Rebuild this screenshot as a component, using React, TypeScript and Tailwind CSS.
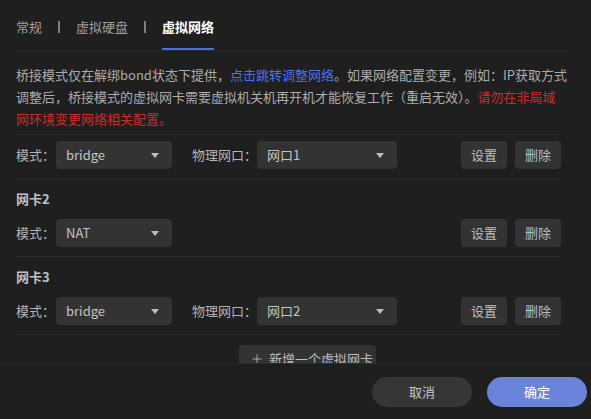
import React, { useState } from 'react';
import { Plus } from 'lucide-react';

const font = { fontFamily: '"Noto Sans CJK SC", "Noto Sans", sans-serif' };

const tabs = ['常规', '虚拟硬盘', '虚拟网络'];

type Nic = {
  title?: string;
  mode: string;
  port?: string;
};

const nics: Nic[] = [
  { mode: 'bridge', port: '网口1' },
  { title: '网卡2', mode: 'NAT' },
  { title: '网卡3', mode: 'bridge', port: '网口2' },
];

const Caret = () => (
  <svg width="8" height="5" viewBox="0 0 8 5" className="shrink-0">
    <polygon points="0,0 8,0 4,5" fill="#bdbdbd" />
  </svg>
);

const Select = ({ value, width }: { value: string; width: string }) => (
  <div
    className={`${width} h-[28px] rounded-[4px] bg-[#333333] pl-[10px] pr-[13px] flex items-center justify-between text-[13px] text-[#c4c4c4]`}
  >
    <span>{value}</span>
    <Caret />
  </div>
);

const SmallButton = ({ label }: { label: string }) => (
  <button className="w-[46px] h-[28px] rounded-[4px] bg-[#333333] text-[13px] text-[#bdbdbd] flex items-center justify-center">
    {label}
  </button>
);

const NicRow = ({ nic }: { nic: Nic }) => (
  <div className="flex items-center h-[28px] text-[13px] text-[#b4b4b4]">
    <span className="w-[40px]">模式：</span>
    <Select value={nic.mode} width="w-[116px]" />
    {nic.port && (
      <>
        <span className="ml-[20px] w-[65px]">物理网口：</span>
        <Select value={nic.port} width="w-[140px]" />
      </>
    )}
    <div className="ml-auto flex gap-[8px]">
      <SmallButton label="设置" />
      <SmallButton label="删除" />
    </div>
  </div>
);

export default function App() {
  const [active, setActive] = useState(2);

  return (
    <div className="w-[591px] h-[419px] bg-[#1f1f1f] flex flex-col overflow-hidden" style={font}>
      {/* tab header */}
      <div className="px-4">
        <div className="w-[552px] h-[51px] flex items-center gap-4 border-b border-[#2a2a2a]">
          {tabs.map((t, i) => (
            <React.Fragment key={t}>
              {i > 0 && <div className="w-[2px] h-[12px] mt-[4px] bg-[#7e7e7e]" />}
              <button
                onClick={() => setActive(i)}
                className={`h-[50px] pt-[5px] border-b-2 text-[13px] ${
                  active === i
                    ? 'border-[#4a6ee0] text-white font-bold'
                    : 'border-transparent text-[#a0a0a0]'
                }`}
              >
                {t}
              </button>
            </React.Fragment>
          ))}
        </div>
      </div>

      {/* scrolling body */}
      <div className="flex-1 overflow-hidden px-4">
        <p className="w-[552px] pt-[13px] text-[13px] leading-[22px] text-[#ababab]">
          桥接模式仅在解绑bond状态下提供，
          <span className="text-[#4d6ff0]">点击跳转调整网络</span>
          。如果网络配置变更，例如：IP获取方式调整后，桥接模式的虚拟网卡需要虚拟机关机再开机才能恢复工作（重启无效）。
          <span className="text-[#cc2b2b]">请勿在非局域网环境变更网络相关配置。</span>
        </p>

        <div className="w-[545px] mt-[4px]">
          {nics.map((nic, i) => (
            <div
              key={i}
              className={`border-b border-[#2a2a2a] pb-[9px] ${
                i === 0 ? 'border-t pt-[6px]' : 'pt-[10px]'
              }`}
            >
              {nic.title && (
                <div className="h-[20px] mb-[10px] flex items-center text-[13px] font-bold text-[#c0c0c0]">
                  {nic.title}
                </div>
              )}
              <NicRow nic={nic} />
            </div>
          ))}
        </div>

        <button className="mt-[10px] ml-[223px] w-[137px] h-[28px] rounded-[4px] bg-[#333333] flex items-center pl-[11px] gap-[5px] text-[13px] text-[#bdbdbd]">
          <Plus size={14} strokeWidth={1.5} />
          新增一个虚拟网卡
        </button>
      </div>

      {/* footer actions */}
      <div className="h-[56px] border-t border-[#2a2a2a] flex justify-end items-start gap-[15px] pt-[13px] pr-[4px]">
        <button className="w-[100px] h-[30px] rounded-full bg-[#363636] text-[13px] text-[#c8c8c8]">取消</button>
        <button className="w-[100px] h-[30px] rounded-full bg-[#6a84dc] text-[13px] text-white">确定</button>
      </div>
    </div>
  );
}
